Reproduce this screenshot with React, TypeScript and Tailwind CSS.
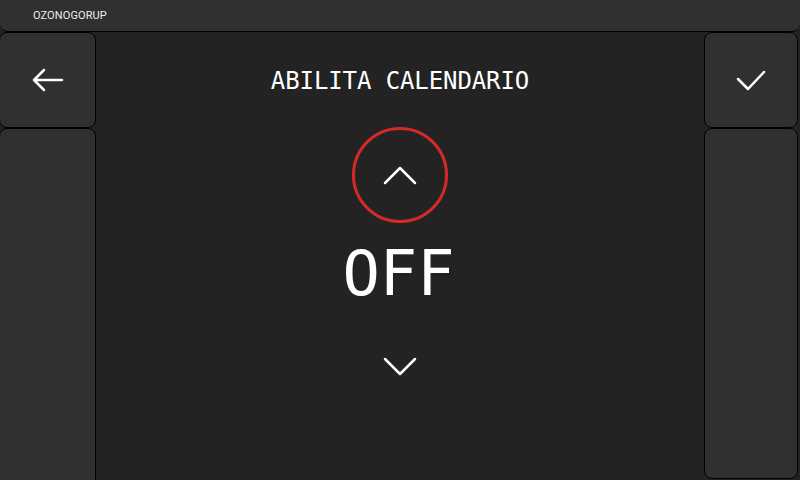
const mono = { fontFamily: '"DejaVu Sans Mono", "Liberation Mono", monospace' };

const Panel = ({ className = '', children }: { className?: string; children?: React.ReactNode }) => (
  <div className={`bg-[#303030] border border-black rounded-lg flex items-center justify-center ${className}`}>
    {children}
  </div>
);

export default function App() {
  return (
    <div className="w-[800px] h-[480px] overflow-hidden bg-[#232323] flex flex-col text-white">
      {/* top bar */}
      <div className="h-8 shrink-0 bg-[#303030] border-b border-black rounded-b-lg flex items-center pl-[33px] pt-[2px]">
        <span className="text-[11px] tracking-[0.1px] text-[#ececec]" style={{ fontFamily: 'Roboto, "Liberation Sans", sans-serif' }}>
          OZONOGORUP
        </span>
      </div>

      <div className="flex flex-1 min-h-0">
        {/* left column */}
        <div className="w-[97px] flex flex-col -ml-px">
          <Panel className="h-[96px] shrink-0">
            <svg width="32" height="24" viewBox="0 0 32 24" fill="none" stroke="white" strokeWidth="2.5" strokeLinecap="round" strokeLinejoin="round">
              <path d="M2 12 H30 M12 2 L2 12 L12 22" />
            </svg>
          </Panel>
          <Panel className="flex-1 rounded-b-none -mb-px" />
        </div>

        {/* center */}
        <div className="flex-1 flex flex-col items-center">
          <div className="mt-8 h-8 leading-8 text-[24px] tracking-[-0.1px] pt-px" style={mono}>
            ABILITA CALENDARIO
          </div>
          <div className="mt-[31px] w-24 h-24 rounded-full border-[3px] border-[#d92828] flex items-center justify-center">
            <svg width="34" height="20" viewBox="0 0 34 20" fill="none" stroke="white" strokeWidth="2.5" strokeLinecap="round" strokeLinejoin="round">
              <polyline points="2,18 17,3 32,18" />
            </svg>
          </div>
          <div className="mt-[20px] h-[62px] leading-[62px] text-[62px] -ml-[3px]" style={mono}>
            OFF
          </div>
          <div className="mt-[52px]">
            <svg width="34" height="20" viewBox="0 0 34 20" fill="none" stroke="white" strokeWidth="2.5" strokeLinecap="round" strokeLinejoin="round">
              <polyline points="2,2 17,17 32,2" />
            </svg>
          </div>
        </div>

        {/* right column */}
        <div className="w-[94px] mr-[2px] flex flex-col">
          <Panel className="h-[96px] shrink-0">
            <svg width="30" height="22" viewBox="0 0 30 22" fill="none" stroke="white" strokeWidth="2.5" strokeLinecap="round" strokeLinejoin="round">
              <polyline points="2,10 12,20 28,3" />
            </svg>
          </Panel>
          <Panel className="flex-1 mb-px" />
        </div>
      </div>
    </div>
  );
}
